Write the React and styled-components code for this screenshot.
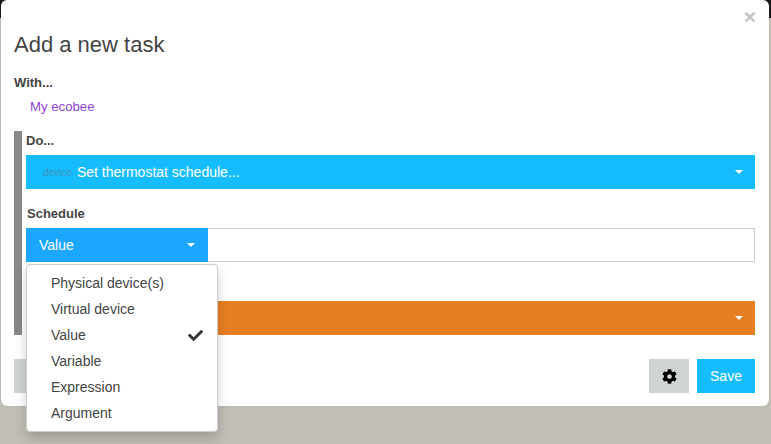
import React from 'react';
import styled, { createGlobalStyle } from 'styled-components';
import { FaCheck, FaCog } from 'react-icons/fa';

const Global = createGlobalStyle`
  html, body { margin: 0; padding: 0; width: 771px; height: 444px; overflow: hidden; background: #c1beb6; }
  * { box-sizing: border-box; }
  body { font-family: "Liberation Sans", Arial, sans-serif; font-size: 14px; color: #444; }
`;
const Backdrop = styled.div`
  width: 771px; height: 444px; padding: 0 2px 0 1px;
  background: linear-gradient(#1a1a1a 0 18px, #c1beb6 18px);
`;
const Modal = styled.div`
  position: relative; height: 406px; background: #fff; border-radius: 6px;
  box-shadow: 0 0 1px rgba(0,0,0,.3);
  padding: 0 14px 0 13px;
`;
const Close = styled.span`
  position: absolute; top: 7px; right: 13px; font-size: 21px; font-weight: 700; line-height: 20px; color: #c4c4c4;
`;
const Title = styled.h4`
  margin: 0; padding-top: 32px; font-size: 22px; font-weight: 400; line-height: 26px; color: #444;
`;
const Label = styled.div`
  font-weight: 700; font-size: 13px; line-height: 16px; color: #444;
`;
const WithLabel = styled(Label)`margin-top: 17px;`;
const Device = styled.div`
  margin: 8px 0 0 16px; font-size: 13.2px; line-height: 16px; color: #8e44d6;
`;
const DoSection = styled.div`
  margin-top: 16px; height: 204px; border-left: 8px solid #888; padding: 2px 0 0 4px;
`;
const SelectBar = styled.div`
  display: flex; align-items: center; height: 34px; margin-top: 6px; padding: 0 12px 0 17px;
  background: ${p => p.$bg}; color: #fff; font-size: 14px;
`;
const Muted = styled.span`font-size: 10px; color: #3f93b8; margin-right: 5px;`;
const Grow = styled.span`flex: 1;`;
const Caret = styled.span`
  width: 0; height: 0; border-left: 4px solid transparent; border-right: 4px solid transparent; border-top: 4px solid #fff;
`;
const ScheduleLabel = styled(Label)`margin: 17px 0 0 1px;`;
const InputRow = styled.div`
  position: relative; display: flex; height: 34px; margin-top: 6px;
`;
const ValueButton = styled.div`
  display: flex; align-items: center; width: 182px; padding: 0 13px;
  background: #1ba6ff; color: #fff; font-size: 14px;
`;
const TextInput = styled.div`
  flex: 1; border: 1px solid #ccc; border-left: 0; background: #fff;
`;
const Menu = styled.ul`
  position: absolute; top: 36px; left: 0; z-index: 5; width: 192px; margin: 0; padding: 5px 0;
  list-style: none; background: #fff; border: 1px solid #ccc; border-radius: 4px;
  box-shadow: 0 6px 12px rgba(0,0,0,.18);
`;
const MenuItem = styled.li`
  display: flex; align-items: center; justify-content: space-between; height: 26px; padding: 0 14px 0 24px;
  font-size: 14px; color: #444;
`;
const CondLabel = styled(Label)`margin-top: 17px;`;
const Footer = styled.div`
  display: flex; align-items: stretch; height: 34px; margin-top: 24px;
`;
const CancelButton = styled.div`
  width: 120px; background: #d0d3d4;
`;
const Spacer = styled.div`flex: 1;`;
const GearButton = styled.div`
  display: flex; align-items: center; justify-content: center; width: 40px; margin-right: 8px;
  background: #d0d3d4; color: #000; font-size: 15px;
`;
const SaveButton = styled.div`
  display: flex; align-items: center; justify-content: center; width: 58px;
  background: #15bdff; color: #fff; font-size: 14px;
`;

export default function App() {
  const items = ['Physical device(s)', 'Virtual device', 'Value', 'Variable', 'Expression', 'Argument'];
  return (
    <Backdrop>
      <Global />
      <Modal>
        <Close>×</Close>
        <Title>Add a new task</Title>
        <WithLabel>With...</WithLabel>
        <Device>My ecobee</Device>
        <DoSection>
          <Label>Do...</Label>
          <SelectBar $bg="#15bdff">
            <Muted>device</Muted>
            <Grow>Set thermostat schedule...</Grow>
            <Caret />
          </SelectBar>
          <ScheduleLabel>Schedule</ScheduleLabel>
          <InputRow>
            <ValueButton><Grow>Value</Grow><Caret /></ValueButton>
            <TextInput />
            <Menu>
              {items.map(i => (
                <MenuItem key={i}>{i}{i === 'Value' && <FaCheck size={15} color="#333" />}</MenuItem>
              ))}
            </Menu>
          </InputRow>
          <CondLabel>Color</CondLabel>
          <SelectBar $bg="#e67e22"><Grow /><Caret /></SelectBar>
        </DoSection>
        <Footer>
          <CancelButton />
          <Spacer />
          <GearButton><FaCog /></GearButton>
          <SaveButton>Save</SaveButton>
        </Footer>
      </Modal>
    </Backdrop>
  );
}
